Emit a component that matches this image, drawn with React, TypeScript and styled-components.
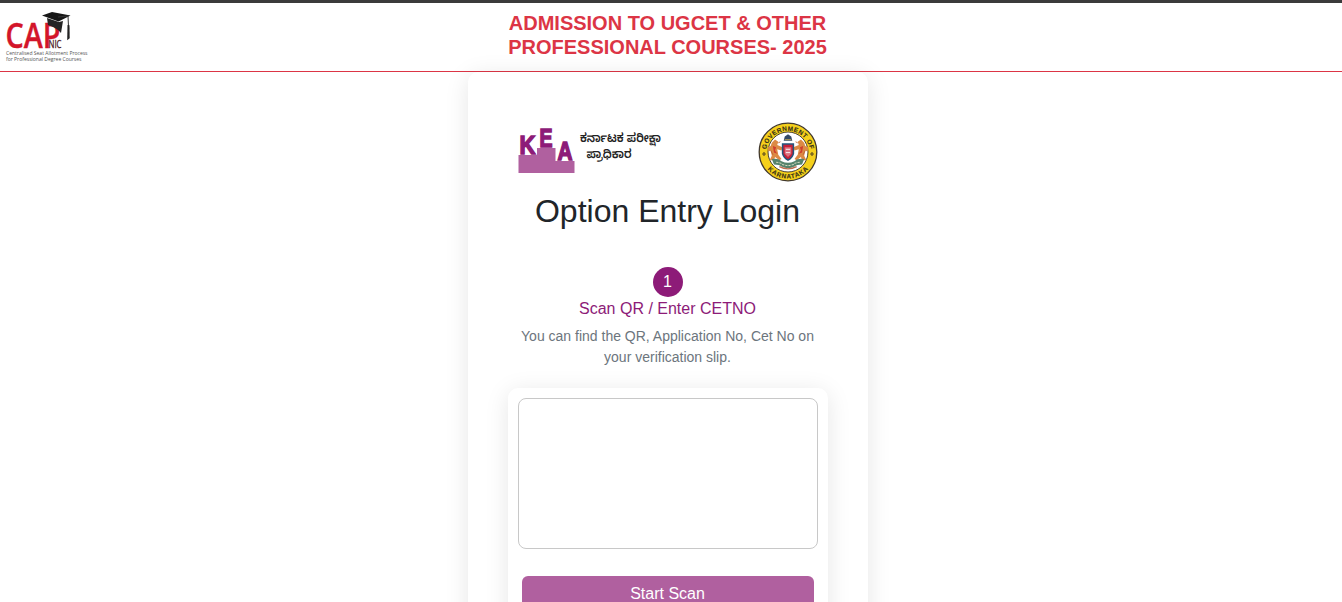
import React from "react";
import styled, { createGlobalStyle } from "styled-components";

const Global = createGlobalStyle`
  *, *::before, *::after { box-sizing: border-box; }
  html, body { height: 100%; overflow: hidden; }
  body {
    margin: 0;
    background: #fff;
    color: #212529;
    font-family: Arial, "Liberation Sans", sans-serif;
    font-size: 16px;
    line-height: 1.5;
  }
`;

const Page = styled.div`
  height: 100vh;
  overflow: hidden;
`;

const Header = styled.header`
  display: grid;
  grid-template-columns: 1fr 320px 1fr;
  height: 72px;
  padding-right: 7px;
  border-top: 3px solid #3b3b3b;
  border-bottom: 1px solid #dc3545;
`;

const Brand = styled.div`
  padding: 6px 0 0 3px;
  svg { display: block; }
`;

const HeaderTitle = styled.h1`
  margin: 8px 0 0;
  color: #dc3545;
  font-size: 20px;
  font-weight: 700;
  line-height: 24px;
  text-align: center;
  white-space: nowrap;
`;

const Content = styled.div`
  display: flex;
  justify-content: center;
  padding-right: 7px;
`;

const Card = styled.main`
  width: 400px;
  height: 760px;
  padding: 50px 40px 40px;
  background: #fff;
  border-radius: 10px;
  box-shadow: 0 4px 25px rgba(0, 0, 0, 0.1);
`;

const Logos = styled.div`
  display: flex;
  justify-content: space-between;
  height: 60px;
  padding: 0 10px;
  svg { display: block; }
`;

const Title = styled.h2`
  margin: 10px 0 0;
  font-size: 32px;
  font-weight: 400;
  line-height: 38px;
  text-align: center;
`;

const Step = styled.section`
  display: flex;
  flex-direction: column;
  align-items: center;
  margin-top: 37px;
  text-align: center;
`;

const StepNumber = styled.span`
  width: 30px;
  height: 30px;
  border-radius: 50%;
  background: #8d1b78;
  color: #fff;
  line-height: 30px;
`;

const StepTitle = styled.div`
  color: #8d1b78;
  line-height: 24px;
`;

const StepHint = styled.p`
  margin: 5px 0 0;
  color: #6c757d;
  font-size: 14px;
  line-height: 21px;
`;

const ScanPanel = styled.section`
  height: 300px;
  margin-top: 20px;
  padding: 10px;
  border-radius: 10px;
  background: #fff;
  box-shadow: 0 4px 25px rgba(0, 0, 0, 0.1);
`;

const Preview = styled.div`
  height: 151px;
  border: 1px solid #c8c8c8;
  border-radius: 8px;
`;

const ScanButton = styled.button`
  display: block;
  width: 292px;
  height: 38px;
  margin: 27px auto 0;
  padding: 0 0 2px;
  border: 0;
  border-radius: 6px;
  background: #b0609f;
  color: #fff;
  font: 400 16px/36px Arial, "Liberation Sans", sans-serif;
`;

const CapLogo = () => (
  <svg width="88" height="56" viewBox="3 9 88 56" role="img" aria-label="CAP NIC">
    <text x="5.5" y="48.2" fontFamily="Open Sans, sans-serif" fontSize="34.5" fontWeight="600" fill="#d3152a" stroke="#d3152a" strokeWidth=".4" textLength="55" lengthAdjust="spacingAndGlyphs">CAP</text>
    <text x="48.5" y="48" fontSize="10" fontFamily="Open Sans, sans-serif" fill="#4b2022" stroke="#4b2022" strokeWidth=".3" textLength="13" lengthAdjust="spacingAndGlyphs">NIC</text>
    <path d="M42 15.5 52 12l18.5 3.5-12 6z" fill="#171717" />
    <path d="m47 18 1 7c3 1 9 3 13 8l2-12-4 1z" fill="#252525" />
    <path d="m58 17 10-1 .6 13" fill="none" stroke="#333" strokeWidth="1" />
    <path d="m67.5 25 2 .2.2 13-2.5 2z" fill="#222" />
    <g fontFamily="Open Sans, sans-serif" fontSize="5.6" fill="#555">
      <text x="6" y="55.2" textLength="81.5" lengthAdjust="spacingAndGlyphs">Centralised Seat Allotment Process</text>
      <text x="6" y="61" textLength="75.5" lengthAdjust="spacingAndGlyphs">for Professional Degree Courses</text>
    </g>
  </svg>
);

const KeaLogo = () => (
  <svg width="150" height="60" viewBox="518 122 150 60" role="img" aria-label="KEA">
    <path d="M518.5 155h18.5v-7h18.5v13h19v12h-56z" fill="#b0609f" />
    <g fontFamily="Liberation Sans, sans-serif" fontWeight="700" fill="#8d1b78" stroke="#8d1b78" strokeWidth="1.5">
      <text x="519.5" y="154" fontSize="26" textLength="16" lengthAdjust="spacingAndGlyphs">K</text>
      <text x="539.5" y="147" fontSize="25" textLength="13" lengthAdjust="spacingAndGlyphs">E</text>
      <text x="557.5" y="160" fontSize="25.5" textLength="15" lengthAdjust="spacingAndGlyphs">A</text>
    </g>
    <g fontFamily="Noto Sans Kannada, Noto Sans, sans-serif" fontSize="12" fontWeight="600" fill="#222">
      <text x="580" y="142" textLength="81" lengthAdjust="spacingAndGlyphs">ಕರ್ನಾಟಕ ಪರೀಕ್ಷಾ</text>
      <text x="586.5" y="157.5" textLength="45" lengthAdjust="spacingAndGlyphs">ಪ್ರಾಧಿಕಾರ</text>
    </g>
  </svg>
);

const Lion = () => (
  <g>
    <path d="m-15-8 3-3 3 2-1 3 5 2-1 3-4-1 1 5 3 4-2 1-4-3-1 3h-4l2-4-1-5-2 1-1-4 3-1z" fill="#dc8a45" />
    <path d="m-14-5 3 1-1 3 2 3-3-1z" fill="#cf3d2d" />
    <path d="m-14 3-2-4m7-7 2-1" fill="none" stroke="#b95b32" strokeWidth=".8" />
  </g>
);

const StateEmblem = () => (
  <svg width="60" height="60" viewBox="-30 -30 60 60" role="img" aria-label="Government of Karnataka">
    <defs>
      <path id="ringTop" d="M-22.2 1a22.2 22.2 0 1 1 44.4 0" />
      <path id="ringBottom" d="M-26.6 0a26.6 26.6 0 0 0 53.2 0" />
    </defs>
    <circle r="28.8" fill="#f5d01b" stroke="#40372c" strokeWidth="1.3" />
    <circle r="20" fill="#fff" stroke="#4c4330" strokeWidth="1" />
    <g fontFamily="Liberation Sans, sans-serif" fontSize="6.4" fontWeight="700" fill="#342f18" stroke="#342f18" strokeWidth=".1" textAnchor="middle">
      <text><textPath href="#ringTop" startOffset="50%" textLength="62">GOVERNMENT OF</textPath></text>
      <text><textPath href="#ringBottom" startOffset="50%" textLength="46">KARNATAKA</textPath></text>
    </g>
    <path d="M-26 2h4m-2-2v4m46-2h4m-2-2v4" stroke="#62501d" strokeWidth="1.2" />
    <g transform="translate(0 -.5) scale(1.08)">
      <Lion />
      <g transform="scale(-1 1)"><Lion /></g>
      <path d="M-4-10h8l-1-4-3-2-3 2z" fill="#344a65" />
      <path d="M-3-11h6" stroke="#a79558" />
      <path d="M-5-7H5V2Q4 6 0 8-4 6-5 2z" fill="#c82138" stroke="#24547c" strokeWidth="1.4" />
      <path d="M-3-4h6v6l-3 3-3-3z" fill="#dc7180" />
      <path d="M-2-2h4m-4 3h4" stroke="#fff" strokeWidth=".8" />
      <path d="M-15 7q6-1 9 2 6 3 12 0 3-3 9-2l-2 5q-5 0-7 2-6 3-12 0-2-2-7-2z" fill="#55836c" />
      <path d="M-11 10q4 0 6 2 5 2 10 0 2-2 6-2" fill="none" stroke="#d2d8bd" strokeWidth="1" strokeDasharray="2 1" />
      <path d="M-8 14q8 4 16 0" fill="none" stroke="#bd6d50" strokeWidth="1.2" />
    </g>
  </svg>
);

export default function App() {
  return (
    <Page>
      <Global />
      <Header>
        <Brand><CapLogo /></Brand>
        <HeaderTitle>ADMISSION TO UGCET &amp; OTHER<br />PROFESSIONAL COURSES- 2025</HeaderTitle>
      </Header>
      <Content>
        <Card>
          <Logos>
            <KeaLogo />
            <StateEmblem />
          </Logos>
          <Title>Option Entry Login</Title>
          <Step>
            <StepNumber>1</StepNumber>
            <StepTitle>Scan QR / Enter CETNO</StepTitle>
            <StepHint>You can find the QR, Application No, Cet No on your verification slip.</StepHint>
          </Step>
          <ScanPanel>
            <Preview />
            <ScanButton>Start Scan</ScanButton>
          </ScanPanel>
        </Card>
      </Content>
    </Page>
  );
}
